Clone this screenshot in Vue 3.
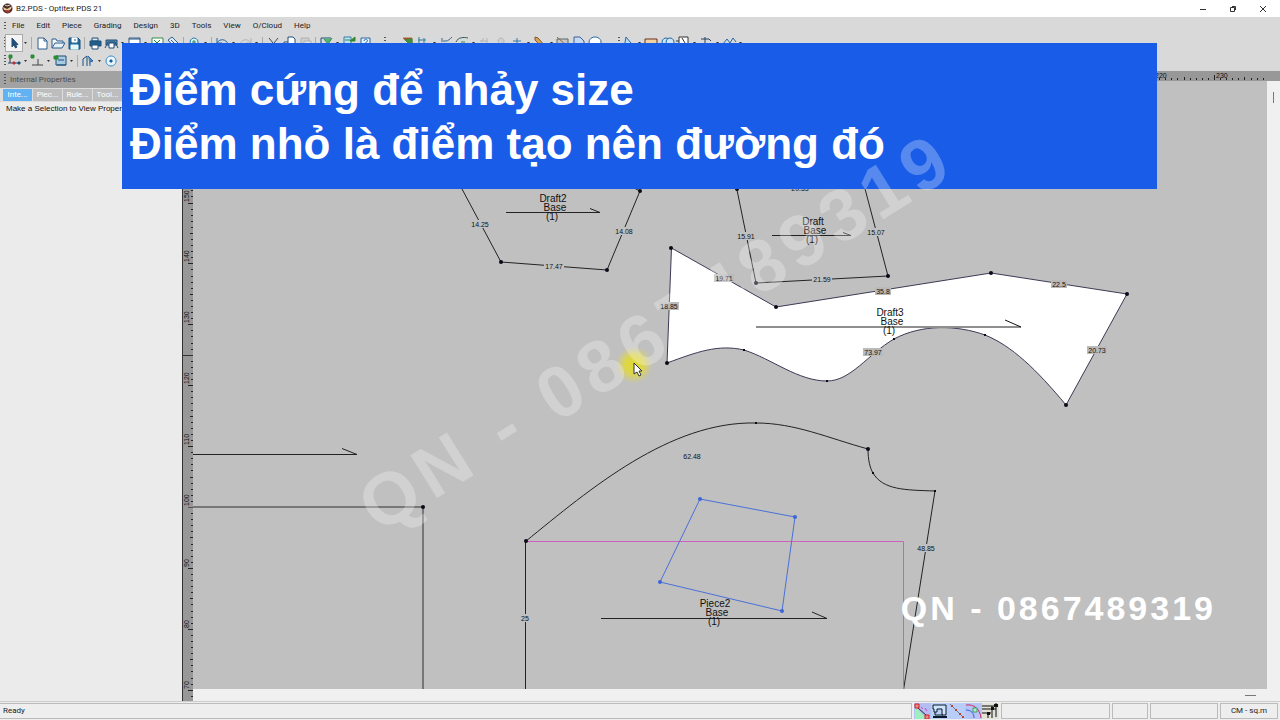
<script setup>
const menus = ['File', 'Edit', 'Piece', 'Grading', 'Design', '3D', 'Tools', 'View', 'O/Cloud', 'Help']
const tabs = ['Inte...', 'Piec...', 'Rule...', 'Tool...']

const navy = '#1f4e79'
const icons = {
  pointer: [['M6 3v9l2-2 1.500 3 1.500-1-1.500-2.500H12z', navy, navy]],
  newdoc: [['M4 3h6l3 3v8H4z', '#2d5f8c', '#fff'], ['M10 3v3h3', '#2d5f8c', 'none']],
  open: [['M2 13V4h4l1 2h6v2', '#2d5f8c', '#f4f8fb'], ['M2 13l3-5h10l-3 5z', '#2d5f8c', '#e6f0f8']],
  save: [['M3 3h9l2 2v9H3z', '#17507f', '#2a6b9e'], ['M6 3h5v4H6z', '#fff', '#fff'], ['M5 10h7v4H5z', '#dff', '#e8f4fa'], ['M9 4v2', navy, navy]],
  print: [['M5 3h6v3H5z', navy, '#dce9f2'], ['M3 6h11v5H3z', navy, '#225e8c'], ['M5 10h6v4H5z', navy, '#fff']],
  plot: [['M3 5h11v5H3z', navy, '#5b89ad'], ['M2 13l3-6h7l3 6', navy, 'none'], ['M6 8h5v5H6z', navy, '#fff']],
  window: [['M3 3h11v10H3z', '#2d5f8c', '#fff'], ['M3 4h11', navy, 'none']],
  excel: [['M3 3h11v10H3z', '#2f8f43', '#fff'], ['M5 5l6 6M11 5l-6 6', '#1b8a35', 'none']],
  diamond: [['M3 5l4-3 7 7-4 4z', '#2d5f8c', '#dfeaf3'], ['M6 5l6 6', '#2d5f8c', 'none']],
  zoom: [['M8 3a4 4 0 1 0 .1 0z', '#2a7ab0', '#d9f0fa'], ['M6 7h4M8 5v4', '#2d8a50', 'none'], ['M11 10l4 4', navy, 'none']],
  undo: [['M3 8c3-5 9-4 11 1M3 3v5h5', '#2567a5', 'none']],
  redo: [['M14 8c-3-5-9-4-11 1M14 3v5H9', '#b3b3b3', 'none']],
  cut: [['M4 3l8 10M13 3L5 13', '#3b4d5c', 'none']],
  copy: [['M3 7h5v7H3z', navy, '#fff'], ['M7 2h5l2 2v7H7z', navy, '#fff']],
  paste: [['M4 3h8v10H4z', '#b0b0b0', '#cfcfcf'], ['M7 6h7v8H7z', '#b0b0b0', '#e3e3e3']],
  select: [['M3 3h10M3 3v8', navy, 'none'], ['M6 4l4 5 4-6', '#2a8f4d', '#57b377']],
  sheet: [['M3 2h7v10H3z', '#347ba7', '#bfe3f2'], ['M9 6l5-4v4z', '#2d8a2d', '#2d8a2d'], ['M4 5h5', '#2d8a50', 'none']],
  help: [['M4 3h9v10H4z', '#2567a5', '#e6f2fb'], ['M7 6c0-2 4-2 3.500 0L8.500 8v2', '#2567a5', 'none']],
  wedge: [['M4 3h9v9z', '#b06a30', '#7a4a2c'], ['M6 5l7 7V4z', '#3c8f45', '#3c8f45']],
  axis: [['M4 2v11M3 5h8M9 3v8', '#2f7fa0', 'none']],
  curve: [['M3 6h5c2 0 4-2 6-4M3 4h2', '#3c6a8a', 'none']],
  arc: [['M2 7c2-5 8-5 12-4', '#2d5f5c', 'none'], ['M7 7h4', '#2d9a40', '#2d9a40']],
  dim: [['M3 6h7M10 3v8M4 7l3-4', '#b5b5b5', 'none']],
  ring: [['M8 3a3 3 0 1 0 .1 0z', '#b5b5b5', '#d0d0d0']],
  plus: [['M8 3v9M4 6h8', '#3b78a8', 'none']],
  pencil: [['M3 2l3 1 7 8-2 2-8-8z', '#7c5734', '#e1a24f']],
  frame: [['M2 4h11v8H2z', '#56676f', '#c8c8c0'], ['M2 2l11 10', '#8a6a40', 'none']],
  page: [['M3 2h6l4 4v8H3z', '#3b5f9a', '#c7d8f2']],
  circle: [['M8 2a6 5 0 1 0 .1 0z', '#2567a5', '#fff']],
  drop: [['M6 2l5 6-4 5H4z', '#2567a5', '#b9dcf3']],
  ruler: [['M2 4h12v5H2z', '#6b2f22', '#f0d2a0']],
  overlap: [['M7 3a4 4 0 1 0 .1 0z', '#2567a5', '#cce6f6'], ['M11 3a4 4 0 1 0 .1 0z', '#2567a5', '#cce6f6']],
  box: [['M4 2h9v10H4z', '#333', '#fff'], ['M7 3l3 5M1 6h3', '#333', 'none']],
  hammer: [['M3 4h8l2 2M7 2v10', '#27415e', 'none']],
  peaks: [['M2 9l4-5 3 4 3-5 3 4', '#2567a5', 'none']],
  nodes: [['M2 10h12', navy, 'none'], ['M3 2h3v3H3z', '#2c8b35', '#2c8b35'], ['M4 5v5', '#333', 'none'], ['M7 9h2v2H7z', '#b33', '#b33'], ['M12 9h2v2h-2z', navy, navy]],
  perp: [['M3 12h11M9 6v6', '#444', 'none'], ['M2 2h3v3H2z', '#2c8b35', '#2c8b35']],
  machine: [['M4 3h10v9H4z', navy, '#a9cbe2'], ['M2 3h4v3H2z', '#2c8b35', '#2c8b35'], ['M6 7h6M5 12h9', navy, 'none']],
  split: [['M3 13V6l4-3v10', navy, 'none'], ['M8 3l5 5-3 1v4', '#2567a5', '#4d86b5']],
  target: [['M8 3a5 5 0 1 0 .1 0z', '#2f88c5', '#e9f5fc'], ['M7 7h2v2H7z', '#1f6095', '#1f6095']]
}

const rowOne = [
  ['newdoc', 'open', 'save', '|', 'print', 'plot', 'v', 'window', 'v', 'excel', 'diamond', '|', 'zoom', 'v', '|', 'undo', 'v', 'redo', 'v', '|', 'cut', 'copy', 'paste', '|', 'select', 'v', 'sheet', 'help'],
  ['wedge', 'axis', 'v', 'curve', 'arc', 'v', 'dim', 'ring', 'plus', 'v', 'pencil', 'v', 'frame', 'page', 'circle'],
  ['drop', 'v', 'ruler', 'overlap', 'box', 'v', 'hammer', 'v', 'peaks', 'v']
]
const rowTwo = ['nodes', 'v', 'perp', 'v', 'machine', 'v', '|', 'split', 'v', 'target']

const unit = 6.09
const vTicks = []
for (let v = 68; v <= 152; v++) vTicks.push({ v, y: Math.round(507 + (100 - v) * unit) })
const hTicks = []
for (let v = 220; v <= 238; v++) hTicks.push({ v, x: Math.round(1214 + (v - 230) * unit) })
const tick = v => (v % 10 === 0 ? 5 : v % 5 === 0 ? 3 : 2)

const labels = [
  { t: '14.25', x: 480, y: 224 }, { t: '14.08', x: 624, y: 231 }, { t: '17.47', x: 554, y: 266 },
  { t: '15.91', x: 746, y: 236 }, { t: '15.07', x: 876, y: 232 }, { t: '21.59', x: 822, y: 279 },
  { t: '20.53', x: 800, y: 188 }, { t: '62.48', x: 692, y: 456 }, { t: '48.85', x: 926, y: 548 },
  { t: '25', x: 525, y: 618 },
  { t: '19.71', x: 724, y: 278, on: true }, { t: '18.85', x: 669, y: 306, on: true },
  { t: '35.8', x: 883, y: 291, on: true }, { t: '22.5', x: 1059, y: 284, on: true },
  { t: '20.73', x: 1097, y: 350, on: true }, { t: '73.97', x: 873, y: 352, on: true }
].map(l => ({ ...l, w: l.t.length * 4 }))

const names = [
  { t: 'Draft2', x: 553, y: 202 }, { t: 'Draft', x: 813, y: 225 },
  { t: 'Draft3', x: 890, y: 316 }, { t: 'Piece2', x: 715, y: 607 }
]
const dots = [
  [501, 262], [607, 270], [640, 191], [888, 276], [737, 189], [756, 283], [671, 248], [776, 307], [991, 273],
  [1127, 294], [1066, 405], [667, 363], [868, 449], [526, 541], [423, 507]
]
const smallDots = [[744, 350], [827, 381], [894, 339], [985, 335], [756, 423], [873, 473], [935, 491]]
const blueDots = [[700, 499], [795, 517], [782, 611], [660, 582]]
</script>

<template>
  <div class="app">
    <header class="titlebar">
      <svg class="logo" width="11" height="11" viewBox="0 0 11 11">
        <circle cx="5.500" cy="5.500" r="5" fill="#4a2a22" />
        <path d="M1 4l4 2 5-3-1 3-3 2-4-1z" fill="#e7c79a" />
        <path d="M2 8l3-1 4 1-3 2z" fill="#a5372b" />
        <path d="M3 2l2 1 3-1" stroke="#ddd" fill="none" />
      </svg>
      <span class="title">B2.PDS - Optitex PDS 21</span>
      <div class="winbtns">
        <button aria-label="Minimize"><svg width="8" height="8"><path d="M1 4.500h6" /></svg></button>
        <button aria-label="Restore"><svg width="8" height="8"><path d="M1.500 2.500h4v4h-4zM3 1.500h3.500V5" /></svg></button>
        <button aria-label="Close"><svg width="8" height="8"><path d="M1 1l6 6M7 1L1 7" /></svg></button>
      </div>
    </header>

    <nav class="menubar">
      <i class="grip"></i>
      <button v-for="m in menus" :key="m">{{ m }}</button>
    </nav>

    <div class="toolbar">
      <i class="grip"></i>
      <button class="tool active" aria-label="pointer">
        <svg width="16" height="16"><path v-for="(p, i) in icons.pointer" :key="i" :d="p[0]" :stroke="p[1]" :fill="p[2]" /></svg>
      </button>
      <i class="caret"></i><i class="sep"></i>
      <div v-for="(group, g) in rowOne" :key="g" class="group">
        <i v-if="g" class="grip"></i>
        <template v-for="(n, k) in group" :key="k">
          <i v-if="n === 'v'" class="caret"></i>
          <i v-else-if="n === '|'" class="sep"></i>
          <button v-else class="tool" :aria-label="n">
            <svg width="16" height="16"><path v-for="(p, i) in icons[n]" :key="i" :d="p[0]" :stroke="p[1]" :fill="p[2]" /></svg>
          </button>
        </template>
      </div>
    </div>
    <div class="toolbar">
      <i class="grip"></i>
      <template v-for="(n, k) in rowTwo" :key="k">
        <i v-if="n === 'v'" class="caret"></i>
        <i v-else-if="n === '|'" class="sep"></i>
        <button v-else class="tool" :aria-label="n">
          <svg width="16" height="16"><path v-for="(p, i) in icons[n]" :key="i" :d="p[0]" :stroke="p[1]" :fill="p[2]" /></svg>
        </button>
      </template>
    </div>

    <main class="main">
      <aside class="panel">
        <h2 class="panel-head"><i class="grip"></i>Internal Properties</h2>
        <div class="tabs">
          <button v-for="(t, i) in tabs" :key="t" :class="{ on: i === 0 }">{{ t }}</button>
        </div>
        <p class="hint">Make a Selection to View Properties</p>
      </aside>

      <section class="workspace">
        <svg class="ruler-top">
          <g transform="translate(-182 -71)">
            <template v-for="t in hTicks" :key="t.v">
              <rect :x="t.x" :y="80 - tick(t.v)" width="1" :height="tick(t.v)" fill="#222" />
              <text v-if="t.v % 10 === 0" :x="t.x + 2" y="78">{{ t.v }}</text>
            </template>
          </g>
        </svg>
        <svg class="ruler-left">
          <g transform="translate(-182 -81)">
            <template v-for="t in vTicks" :key="t.v">
              <rect :x="193 - tick(t.v)" :y="t.y" :width="tick(t.v)" height="1" fill="#222" />
              <text v-if="t.v % 10 === 0" :transform="`translate(189 ${t.y - 1}) rotate(-90)`">{{ t.v }}</text>
            </template>
            <rect x="183" y="355" width="10" height="1" fill="#333" />
            <rect x="188" y="507" width="5" height="1" fill="#555" />
          </g>
        </svg>
        <svg class="canvas">
          <g transform="translate(-193 -81)">
            <g class="ink">
              <path d="M193 454.500H357L342 448.500" />
              <path class="soft" d="M193 507H423V690" />
              <path d="M462 189L501 262L607 270L640 191L634 188" />
              <path d="M736 185L756 283L888 276L864 185" />
              <path d="M506 212.500H600L590 208.500" />
              <path d="M772 235.500H851L843 232.500" />
              <path d="M525.500 690V541.500C590 489 670 421 756 423C795 423 828 438 868 449C868 460 870 468 873 473C883 490 905 490 935 491L903.500 690" />
              <path d="M601 618.500H827L812 612" />
            </g>
            <path d="M526 541.500H903.500V690" fill="none" stroke="#cc62c0" />
            <path d="M671.500 248L776 307L991 273L1127 294L1066 405C1036 369 1012 346 985 335C957 325 922 324 894 339C868 354 851 381 827 381C798 381 772 359 744 350C718 344 697 352 667 363Z" fill="#fff" stroke="#3a3a55" />
            <path d="M756 327H1021" stroke="#8e8e8e" stroke-width="2" fill="none" />
            <path d="M1021 327L1005 320" stroke="#111" fill="none" />
            <path d="M700 499L795 517L782 611L660 582Z" fill="none" stroke="#4a70d8" />
            <circle v-for="(d, i) in dots" :key="'d' + i" :cx="d[0]" :cy="d[1]" r="2" fill="#0a0a18" />
            <rect v-for="(d, i) in smallDots" :key="'s' + i" :x="d[0] - 1" :y="d[1] - 1" width="2" height="2" fill="#0a0a18" />
            <circle v-for="(d, i) in blueDots" :key="'b' + i" :cx="d[0]" :cy="d[1]" r="2" fill="#3c66d8" />
            <g v-for="l in labels" :key="l.t" class="measure">
              <rect :x="l.x - l.w / 2" :y="l.y - 4" :width="l.w" height="8" :class="{ on: l.on }" />
              <text :x="l.x" :y="l.y + 3">{{ l.t }}</text>
            </g>
            <g v-for="n in names" :key="n.t" class="name">
              <text :x="n.x" :y="n.y">{{ n.t }}</text>
              <text :x="n.x + 2" :y="n.y + 9">Base</text>
              <text :x="n.x - 1" :y="n.y + 18">(1)</text>
            </g>
            <defs>
              <radialGradient id="glow">
                <stop offset="0" stop-color="#e2d92c" />
                <stop offset="0.500" stop-color="#e0d93c" stop-opacity="0.850" />
                <stop offset="1" stop-color="#d8d270" stop-opacity="0" />
              </radialGradient>
            </defs>
            <circle cx="634" cy="365" r="19" fill="url(#glow)" />
            <path d="M634 363v11l3-2 2 4 2-1-2-4h3z" fill="#fff" stroke="#333" />
          </g>
        </svg>
        <div class="vscroll"><i></i></div>
        <div class="hscroll"><i></i></div>
      </section>
    </main>

    <footer class="status">
      <div class="cell ready">Ready</div>
      <div class="state-icons">
        <svg width="17" height="16"><path d="M0 0h17v16H0z" fill="#b4bef0" /><path d="M1 4v12h12z" fill="#9cf0bc" /><path d="M3 4l11 10" stroke="#222" /><path d="M1 1h4v4H1zM11 12h4v4h-4z" fill="#e88" stroke="#c22" /><path d="M7 4l2 2M11 5l2 3" stroke="#c4c" /></svg>
        <svg width="17" height="16"><path d="M0 0h17v16H0z" fill="#b9d0f5" /><path d="M2 2h13v10H11V6H6v3H3V6H2z" fill="#cfe3fb" stroke="#0c1b2c" stroke-width="1" /><path d="M2 14h14" stroke="#0c1b2c" stroke-width="2" /><path d="M4 9v3h8" stroke="#0c1b2c" fill="none" /></svg>
        <svg width="17" height="16"><path d="M0 0h17v16H0z" fill="#b8cdf8" /><path d="M2 1l14 14" stroke="#777" /><path d="M3 2h2v2H3zM7 6h2v2H7zM11 10h2v2h-2zM14 13h2v2h-2z" fill="#b6452a" /></svg>
        <svg width="17" height="16"><path d="M0 0h17v16H0z" fill="#b8c4f8" /><path d="M1 2c8-1 14 4 15 13" stroke="#c8305a" fill="none" /><path d="M1 7c5 0 8 3 8 8" stroke="#2f62d0" fill="none" /><path d="M8 5h4v4H8z" stroke="#3a9a60" fill="#b9ecd0" /></svg>
        <svg width="17" height="16"><path d="M0 0h17v16H0z" fill="#e2e2d8" /><path d="M0 3h16M0 6h14M0 10h9M14 0v14M10 3v12M6 9v6" stroke="#111" stroke-width="1" fill="none" /><path d="M12 1h4v3h-4zM9 4h3v3H9zM5 9h3v3H5z" fill="#111" /></svg>
      </div>
      <div class="cell a"></div>
      <div class="cell b"></div>
      <div class="cell c"></div>
      <div class="cell d">CM - sq.m</div>
    </footer>

    <div class="banner">
      <p>Điểm cứng để nhảy size</p>
      <p>Điểm nhỏ là điểm tạo nên đường đó</p>
    </div>
    <div class="mark large"><span>QN - 0867489319</span></div>
    <div class="mark small">QN - 0867489319</div>
  </div>
</template>

<style>
body {
  margin: 0;
}
</style>

<style scoped>
.app {
  position: relative;
  display: flex;
  flex-direction: column;
  height: 100vh;
  overflow: hidden;
  background: #d9d9d9;
  color: #222;
  font: 8px/12px Roboto, "Open Sans", sans-serif;
}
button {
  border: 0;
  padding: 0;
  margin: 0;
  background: none;
  color: inherit;
  font: inherit;
}
svg {
  display: block;
}
.titlebar {
  display: flex;
  align-items: center;
  flex: 0 0 17px;
  padding: 0 6px 0 2px;
  background: #fff;
}
.title {
  flex: 1;
  margin-left: 3px;
}
.winbtns {
  display: flex;
  gap: 8px;
}
.winbtns button {
  display: grid;
  place-items: center;
  width: 22px;
  height: 16px;
}
.winbtns path {
  fill: none;
  stroke: #333;
}
.menubar {
  display: flex;
  align-items: center;
  gap: 12px;
  flex: 0 0 17px;
  padding-left: 4px;
}
.menubar .grip {
  margin-right: -6px;
  height: 8px;
}
.grip {
  flex: none;
  width: 2px;
  height: 12px;
  background: repeating-linear-gradient(#555 0 1px, transparent 1px 3px);
}
.toolbar {
  display: flex;
  align-items: center;
  flex: 0 0 18px;
  padding-left: 4px;
}
.group {
  display: flex;
  align-items: center;
}
.group .grip {
  margin: 0 13px 0 11px;
}
.group:last-child .grip {
  margin: 0 0 0 15px;
}
.tool {
  flex: none;
  width: 16px;
  height: 16px;
}
.tool.active {
  background: #f3f3f3;
  box-shadow: 0 0 0 1px #aaa;
}
.caret {
  flex: none;
  width: 3px;
  height: 2px;
  margin: 0 2px;
  background: #333;
  clip-path: polygon(0 0, 100% 0, 50% 100%);
}
.sep {
  flex: none;
  width: 1px;
  height: 12px;
  margin: 0 2px;
  background: #aaa;
}
.main {
  display: flex;
  flex: 1;
  min-height: 0;
  padding-top: 1px;
}
.panel {
  flex: none;
  width: 182px;
  overflow: hidden;
  background: #ebebeb;
}
.panel-head {
  display: flex;
  align-items: center;
  gap: 4px;
  height: 17px;
  margin: 0;
  padding-left: 4px;
  background: #a2a2a2;
  color: #4c4c4c;
  font-size: 8px;
  font-weight: 400;
}
.tabs {
  display: flex;
  gap: 1px;
  padding: 1px 3px;
  background: #ddd;
}
.tabs button {
  width: 29px;
  height: 12px;
  background: #bdbdbd;
  color: #fff;
}
.tabs button.on {
  background: #62b1f2;
}
.hint {
  margin: 1px 0 0 6px;
  color: #111;
  font-family: "Liberation Sans", Arial, sans-serif;
  font-size: 8px;
  white-space: nowrap;
}
.workspace {
  display: grid;
  flex: 1;
  min-width: 0;
  grid-template-columns: 11px 1fr 13px;
  grid-template-rows: 10px 1fr 12px;
  background: #f0f0f0;
}
.ruler-top {
  grid-column: 1 / 4;
  width: 100%;
  height: 100%;
  background: #989898;
}
.ruler-left {
  grid-row: 2 / 4;
  width: 100%;
  height: 100%;
  background: #989898;
  box-shadow: inset 1px 0 #333;
}
.ruler-top text,
.ruler-left text {
  fill: #111;
  font: 7px "Liberation Sans", Arial, sans-serif;
}
.canvas {
  grid-column: 2;
  grid-row: 2;
  width: 100%;
  height: 100%;
  background: #c0c0c0;
}
.ink path {
  fill: none;
  stroke: #222;
}
.ink .soft {
  stroke: #777;
  stroke-width: 2;
}
.measure rect {
  fill: #c0c0c0;
}
.measure rect.on {
  fill: #bababa;
}
.measure text {
  fill: #111;
  font: 7px "Liberation Sans", Arial, sans-serif;
  text-anchor: middle;
}
.name text {
  fill: #111;
  font: 10px "Liberation Sans", Arial, sans-serif;
  text-anchor: middle;
}
.vscroll {
  display: flex;
  justify-content: center;
  padding-top: 11px;
}
.vscroll i {
  width: 1px;
  height: 11px;
  background: #777;
}
.hscroll {
  grid-column: 2;
  display: flex;
  justify-content: flex-end;
  align-items: center;
  padding-right: 11px;
}
.hscroll i {
  width: 11px;
  height: 1px;
  background: #777;
}
.status {
  display: flex;
  align-items: center;
  flex: 0 0 18px;
  gap: 2px;
  padding-right: 2px;
  border-top: 1px solid #ccc;
  background: #eee;
}
.cell {
  box-sizing: border-box;
  height: 16px;
  border: 1px solid #bbb;
  line-height: 14px;
}
.ready {
  flex: 1;
  padding-left: 3px;
  border-left: 0;
}
.state-icons {
  display: flex;
}
.a {
  width: 109px;
}
.b {
  width: 36px;
}
.c {
  width: 68px;
}
.d {
  width: 58px;
  text-align: center;
}
.banner {
  position: absolute;
  top: 43px;
  left: 122px;
  right: 123px;
  box-sizing: border-box;
  height: 146px;
  padding: 20px 8px;
  background: #185ce8;
  color: #fff;
  font: bold 44px/54px "Liberation Sans", Arial, sans-serif;
  white-space: nowrap;
}
.banner p {
  margin: 0;
}
.mark {
  position: absolute;
  color: #fff;
  font-family: "Liberation Sans", Arial, sans-serif;
  font-weight: 700;
  white-space: nowrap;
}
.mark.large {
  top: 293px;
  left: 314px;
  width: 680px;
  color: rgba(255, 255, 255, 0.28);
  font-size: 73px;
  line-height: 80px;
  letter-spacing: 7px;
  text-align: center;
  transform: rotate(-32deg);
}
.mark.small {
  right: 64px;
  bottom: 92px;
  font-size: 34px;
  line-height: 40px;
  letter-spacing: 3px;
}
</style>
